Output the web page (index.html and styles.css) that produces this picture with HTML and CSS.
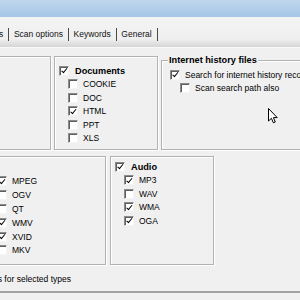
FILE: index.html
```html
<!DOCTYPE html>
<html lang="en">
<head>
    <meta charset="UTF-8">
    <meta name="viewport" content="width=device-width, initial-scale=1.0">
    <title>Scan settings</title>
    <link rel="stylesheet" href="styles.css">
</head>
<body>
    <div class="titlebar"></div>

    <div class="tabs">
        <span class="tab">File types</span>
        <span class="tab">Scan options</span>
        <span class="tab">Keywords</span>
        <span class="tab">General</span>
    </div>

    <div class="page">
        <div class="row row-top">
            <div class="group group-images">
                <div class="check parent"><span class="box on"></span>Images</div>
                <div class="sub">
                    <div class="check"><span class="box on"></span>BMP</div>
                    <div class="check"><span class="box on"></span>GIF</div>
                    <div class="check"><span class="box on"></span>JPG</div>
                    <div class="check"><span class="box"></span>PNG</div>
                    <div class="check"><span class="box"></span>TIF</div>
                </div>
            </div>

            <div class="group group-docs">
                <div class="check parent"><span class="box on"></span>Documents</div>
                <div class="sub">
                    <div class="check"><span class="box"></span>COOKIE</div>
                    <div class="check"><span class="box"></span>DOC</div>
                    <div class="check"><span class="box on"></span>HTML</div>
                    <div class="check"><span class="box"></span>PPT</div>
                    <div class="check"><span class="box"></span>XLS</div>
                </div>
            </div>

            <div class="group group-history">
                <div class="group-title">Internet history files</div>
                <div class="check"><span class="box on"></span>Search for internet history records</div>
                <div class="check indent"><span class="box"></span>Scan search path also</div>
            </div>
        </div>

        <div class="row row-bottom">
            <div class="group group-video">
                <div class="col">
                    <div class="check parent"><span class="box on"></span>Video</div>
                    <div class="sub">
                        <div class="check"><span class="box on"></span>3GP</div>
                        <div class="check"><span class="box on"></span>ASF</div>
                        <div class="check"><span class="box on"></span>AVI</div>
                        <div class="check"><span class="box"></span>FLV</div>
                        <div class="check"><span class="box on"></span>MOV</div>
                        <div class="check"><span class="box on"></span>MP4</div>
                    </div>
                </div>
                <div class="col col-next">
                    <div class="sub">
                        <div class="check"><span class="box on"></span>MPEG</div>
                        <div class="check"><span class="box"></span>OGV</div>
                        <div class="check"><span class="box"></span>QT</div>
                        <div class="check"><span class="box on"></span>WMV</div>
                        <div class="check"><span class="box on"></span>XVID</div>
                        <div class="check"><span class="box"></span>MKV</div>
                    </div>
                </div>
            </div>

            <div class="group group-audio">
                <div class="check parent"><span class="box on"></span>Audio</div>
                <div class="sub">
                    <div class="check"><span class="box on"></span>MP3</div>
                    <div class="check"><span class="box"></span>WAV</div>
                    <div class="check"><span class="box on"></span>WMA</div>
                    <div class="check"><span class="box on"></span>OGA</div>
                </div>
            </div>
        </div>

        <div class="hint"><span>Check file signatures for selected types</span></div>
    </div>

    <div class="statusbar"></div>

    <!-- mouse pointer -->
    <svg class="cursor" width="11" height="16" viewBox="0 0 11 16">
        <path d="M0.5 0.5 L0.5 13 L3.4 10.3 L5.4 14.8 L7.3 14 L5.4 9.6 L9.2 9.6 Z" fill="#fff" stroke="#000" stroke-width="1" stroke-linejoin="round"/>
    </svg>
</body>
</html>
```

FILE: styles.css
```css
html, body {
    margin: 0;
    height: 300px;
    overflow: hidden;
}
body {
    position: relative;
    background-color: #f0f0f0;
    font-family: "Liberation Sans", Arial, sans-serif;
    font-size: 8.5px;
    color: #000;
}
.titlebar {
    height: 17px;
    background: linear-gradient(to bottom, #bfd7ee, #a6c6e6);
}
.tabs {
    display: flex;
    align-items: flex-start;
    height: 31px;
    box-sizing: border-box;
    padding-top: 11px;
    margin-left: -38px;
    background: linear-gradient(to bottom, #f4f4f4 0, #efefef 22px, #d3d3d3 31px);
    border-bottom: 1px solid #f9f9f9;
}
.tab {
    flex: none;
    padding: 0 5px;
    line-height: 13px;
    border-right: 1px solid #4a4a4a;
    color: #111;
}
.tab + .tab {
    padding-left: 4.5px;
}
.page {
    padding-top: 8px;
}
.row {
    display: flex;
    align-items: flex-start;
}
.row-bottom {
    margin-top: 6px;
}
.group {
    flex: none;
    box-sizing: border-box;
    padding-left: 4px;
    border: 1px solid #b2b2b2;
    box-shadow: inset 1px 1px 0 #fff, 1px 1px 0 #fff;
}
.row-top .group {
    height: 94px;
}
.row-bottom .group {
    height: 109px;
}
.group-images {
    width: 181px;
    margin-left: -130px;
    padding-top: 7px;
}
.group-docs {
    width: 104px;
    margin-left: 3px;
    padding-top: 7px;
}
.row-top .group-history {
    width: 200px;
    height: 90px;
    margin-top: 4px;
    margin-left: 3px;
    padding-left: 8px;
}
.group-title {
    width: max-content;
    margin: -6px 0 3px -2px;
    padding: 0 1px;
    background-color: #f0f0f0;
    font-weight: bold;
    font-size: 9.2px;
    line-height: 10px;
}
.group-video {
    display: flex;
    width: 256px;
    margin-left: -150px;
    padding-left: 6px;
    padding-top: 4px;
}
.group-video .col {
    flex: none;
    width: 131px;
}
.group-video .col-next {
    padding-top: 13.5px;
}
.group-video .check {
    height: 13.8px;
}
.group-audio {
    width: 104px;
    margin-left: 4px;
    padding-top: 3px;
}
.check {
    display: flex;
    align-items: center;
    height: 13.5px;
    white-space: nowrap;
}
.check.parent {
    font-weight: bold;
    font-size: 9.2px;
}
.check.parent .box {
    margin-right: 6px;
}
.check.indent {
    padding-left: 10px;
}
.sub {
    padding-left: 9px;
}
.box {
    flex: none;
    position: relative;
    width: 10px;
    height: 10px;
    box-sizing: border-box;
    margin-right: 5px;
    background-color: #fff;
    border: 1px solid;
    border-color: #8c8c8c #f4f4f4 #f4f4f4 #8c8c8c;
    box-shadow: inset 1px 1px 0 #5e5e5e;
}
.box.on::after {
    content: "";
    position: absolute;
    left: 2.5px;
    top: 0.5px;
    width: 2px;
    height: 4.5px;
    border: solid #000;
    border-width: 0 1.6px 1.6px 0;
    transform: rotate(40deg);
}
.hint {
    display: flex;
    justify-content: flex-end;
    width: 71px;
    margin-top: 9px;
    line-height: 10px;
    white-space: nowrap;
}
.statusbar {
    margin-top: 7px;
    height: 20px;
    border-top: 2px solid #a2a2a2;
}
.cursor {
    position: absolute;
    left: 268px;
    top: 108px;
}
```
